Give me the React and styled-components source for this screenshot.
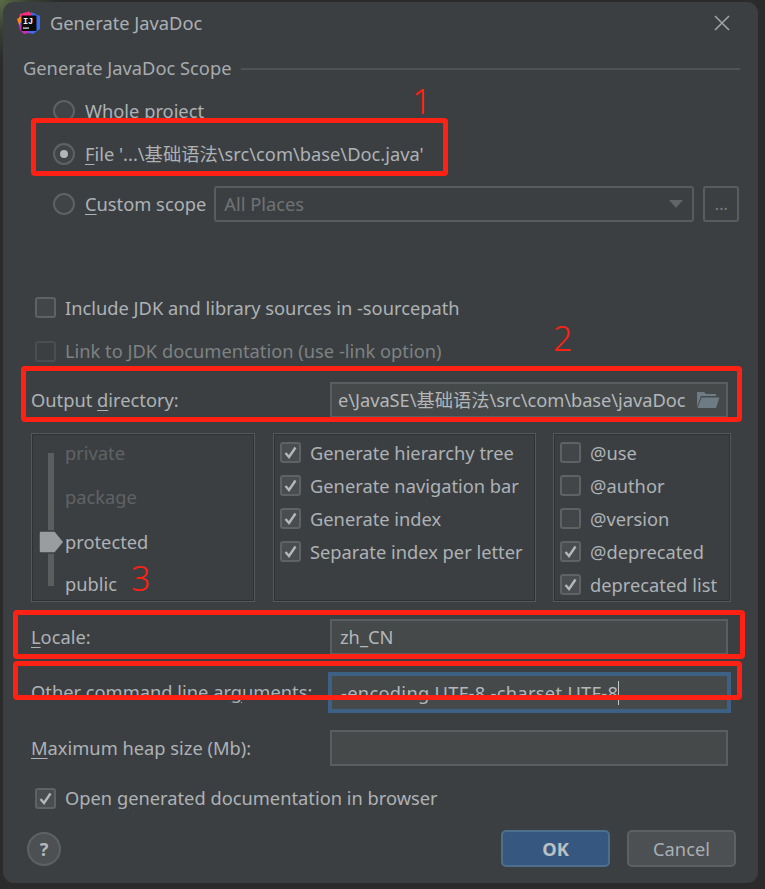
import React from "react";
import styled, { createGlobalStyle } from "styled-components";

const GlobalStyle = createGlobalStyle`
  html, body {
    margin: 0;
    padding: 0;
    background: #2b2b2b;
  }
  body {
    font-family: "Noto Sans", "Noto Sans CJK SC", sans-serif;
    font-size: 18.3px;
    color: #adb2b6;
  }
`;

const Page = styled.div`
  position: relative;
  width: 765px;
  height: 889px;
  overflow: hidden;
  padding: 2px 7px 6px 3px;
  box-sizing: border-box;
  background: radial-gradient(circle at 0 0, #5a6b45 0, #3a3f36 30px, #2b2b2b 60px);
`;

const Dialog = styled.div`
  height: 881px;
  background: #3c3f41;
  border-radius: 11px;
  display: flex;
  flex-direction: column;
`;

const TitleBar = styled.div`
  height: 42px;
  display: flex;
  align-items: center;
  padding: 0 28px 0 14px;
  flex: none;
`;

const AppTitle = styled.div`
  margin-left: 9px;
  flex: 1;
  color: #abb0b4;
  padding-bottom: 2px;
`;

const GroupHeader = styled.div`
  margin: 12px 18px 0 20px;
  height: 24px;
  display: flex;
  align-items: center;
  gap: 10px;
  color: #a6abaf;
`;

const GroupLine = styled.div`
  flex: 1;
  height: 2px;
  margin-top: 2px;
  background: #505253;
`;

const Row = styled.div`
  margin-top: ${(p) => p.$top}px;
  margin-left: ${(p) => p.$left}px;
  height: ${(p) => p.$height || 36}px;
  display: flex;
  align-items: center;
  flex: none;
  white-space: nowrap;
  color: ${(p) => (p.$disabled ? "#7d8285" : "#adb2b6")};
`;

const Label = styled.span`
  padding-bottom: 2px;
`;

const Radio = styled.div`
  width: 22px;
  height: 22px;
  box-sizing: border-box;
  border-radius: 50%;
  border: 2px solid #5f6264;
  background: #404446;
  margin-right: 10px;
  flex: none;
  display: flex;
  align-items: center;
  justify-content: center;
  &::after {
    content: "";
    display: ${(p) => (p.$checked ? "block" : "none")};
    width: 8px;
    height: 8px;
    border-radius: 50%;
    background: #b2b5b7;
  }
`;

const Mnemonic = styled.span`
  text-decoration: underline;
  text-underline-offset: 3px;
`;

const Combo = styled.div`
  margin-left: 8px;
  width: 480px;
  height: 36px;
  box-sizing: border-box;
  border: 2px solid #595c5e;
  border-radius: 3px;
  padding: 0 9px 0 8px;
  display: flex;
  align-items: center;
  justify-content: space-between;
  color: #6f7375;
`;

const ComboArrow = styled.div`
  width: 0;
  height: 0;
  border-left: 7px solid transparent;
  border-right: 7px solid transparent;
  border-top: 8px solid #626466;
`;

const DotsButton = styled.div`
  margin-left: 9px;
  width: 36px;
  height: 36px;
  box-sizing: border-box;
  border: 2px solid #595c5e;
  border-radius: 3px;
  display: flex;
  align-items: center;
  justify-content: center;
  color: #7a7d80;
  font-size: 16px;
`;

const CheckBoxShape = styled.div`
  width: 21px;
  height: 21px;
  box-sizing: border-box;
  border-radius: 3px;
  border: 2px solid ${(p) => (p.$disabled ? "#4b4e50" : "#5f6264")};
  background: ${(p) => (p.$checked ? "#4a4d4f" : p.$disabled ? "#3c3f41" : "#424648")};
  margin-right: 9px;
  flex: none;
  display: flex;
  align-items: center;
  justify-content: center;
`;

const FieldLabel = styled.div`
  width: 299px;
  flex: none;
  padding-bottom: 2px;
`;

const Field = styled.div`
  width: 398px;
  height: ${(p) => p.$height || 36}px;
  box-sizing: border-box;
  background: #45494a;
  border: 2px solid #5b5e60;
  padding: 0 8px 2px;
  display: flex;
  align-items: center;
  overflow: hidden;
  flex: none;
  color: #b3b7ba;
`;

const FocusField = styled(Field)`
  width: 403px;
  margin-left: -2px;
  border: 4px solid #3d6185;
  padding: 0 9px;
  letter-spacing: 0.3px;
`;

const Caret = styled.span`
  display: inline-block;
  width: 1px;
  height: 24px;
  background: #c4c7c9;
`;

const OutputField = styled(Field)`
  justify-content: space-between;
  padding: 0 6px 0 6px;
`;

const OutputText = styled.span`
  padding-bottom: 2px;
  letter-spacing: -0.05px;
`;

const Panels = styled.div`
  margin: 15px 0 0 28px;
  height: 169px;
  display: flex;
  flex: none;
`;

const Panel = styled.div`
  width: ${(p) => p.$width}px;
  margin-right: ${(p) => p.$gap || 0}px;
  box-sizing: border-box;
  border: 1px solid #55585a;
  outline: 1px solid #2f3234;
  outline-offset: -2px;
  padding: 2px 0 0 6px;
`;

const PanelRow = styled.div`
  height: 33px;
  display: flex;
  align-items: center;
  white-space: nowrap;
`;

const SliderPanel = styled(Panel)`
  display: flex;
  padding: 0;
`;

const Track = styled.div`
  position: relative;
  margin: 19px 0 0 16px;
  width: 6px;
  height: 133px;
  background: #5b5d5f;
  flex: none;
`;

const Thumb = styled.svg`
  position: absolute;
  left: -9px;
  top: 78px;
  overflow: visible;
`;

const SliderLabels = styled.div`
  margin-left: 11px;
  padding-top: 4px;
  display: flex;
  flex-direction: column;
`;

const SliderLabel = styled.div`
  height: ${(p) => p.$height}px;
  line-height: 30px;
  color: ${(p) => (p.$disabled ? "#5f6366" : "#adb2b6")};
`;

const Footer = styled.div`
  margin: 21px 22px 0 24px;
  height: 37px;
  display: flex;
  align-items: center;
  flex: none;
`;

const Help = styled.div`
  width: 34px;
  height: 34px;
  box-sizing: border-box;
  border-radius: 50%;
  background: #4c5052;
  border: 2px solid #5e6163;
  display: flex;
  align-items: center;
  justify-content: center;
  font-weight: 700;
  font-size: 18px;
  color: #b4b7b9;
`;

const Spacer = styled.div`
  flex: 1;
`;

const Button = styled.div`
  width: 109px;
  height: 37px;
  box-sizing: border-box;
  margin-left: ${(p) => p.$left || 0}px;
  border-radius: 5px;
  border: 2px solid ${(p) => (p.$primary ? "#4c708c" : "#5e6163")};
  background: ${(p) => (p.$primary ? "#365880" : "#4c5052")};
  color: ${(p) => (p.$primary ? "#bbc0c4" : "#a9aeb2")};
  font-weight: ${(p) => (p.$primary ? 700 : 400)};
  display: flex;
  align-items: center;
  justify-content: center;
`;

// red marks drawn over the screenshot
const RedBox = styled.div`
  position: absolute;
  left: ${(p) => p.$x}px;
  top: ${(p) => p.$y}px;
  width: ${(p) => p.$w}px;
  height: ${(p) => p.$h}px;
  box-sizing: border-box;
  border: 5px solid #ff2114;
  border-radius: 4px;
`;

const RedNumber = styled.div`
  position: absolute;
  left: ${(p) => p.$x}px;
  top: ${(p) => p.$y}px;
  font-family: "Noto Sans", sans-serif;
  font-size: 34px;
  line-height: 40px;
  font-weight: 300;
  color: #ff2114;
`;

const Check = () => (
  <svg width="15" height="15" viewBox="0 0 15 15">
    <path d="M2.5 8 L6 12 L12.5 2.5" fill="none" stroke="#b4b7b9" strokeWidth="2.4" />
  </svg>
);

const CheckBox = ({ checked, disabled }) => (
  <CheckBoxShape $checked={checked} $disabled={disabled}>
    {checked && <Check />}
  </CheckBoxShape>
);

const AppIcon = () => (
  <svg width="24" height="24" viewBox="0 0 24 24">
    <polygon points="3,3 12,0.5 16,5 8,13 1,11" fill="#ff2f7e" />
    <polygon points="0,8 5,5 7,15 3,17" fill="#fc801d" />
    <polygon points="14,1 23,5 23,18 16,23 8,21 4,18 3,12 14,8" fill="#3b6cf0" />
    <polygon points="2,14 8,10 12,22 7,23 3,19" fill="#c22fb5" />
    <rect x="4.5" y="4.5" width="15" height="15.5" fill="#0c0c0c" />
    <text x="6" y="12.5" fontFamily="Liberation Mono, monospace" fontWeight="700" fontSize="8.5" fill="#f2f2f2">
      IJ
    </text>
    <rect x="6" y="16.5" width="6" height="1.2" fill="#e8e8e8" />
  </svg>
);

const CloseIcon = () => (
  <svg width="16" height="16" viewBox="0 0 16 16">
    <path d="M1 1 L15 15 M15 1 L1 15" stroke="#a3a6a8" strokeWidth="1.5" />
  </svg>
);

const FolderIcon = () => (
  <svg width="24" height="18" viewBox="0 0 24 18" style={{ flex: "none" }}>
    <path d="M1 16 V1 H8 L10 3 H20 V5 H5 Z" fill="#6d7c84" />
    <path d="M5.5 6.5 H23.5 L20 17 H1.5 Z" fill="#6d7c84" />
  </svg>
);

const hierarchyRows = [
  "Generate hierarchy tree",
  "Generate navigation bar",
  "Generate index",
  "Separate index per letter",
];

const tagRows = [
  { label: "@use", checked: false },
  { label: "@author", checked: false },
  { label: "@version", checked: false },
  { label: "@deprecated", checked: true },
  { label: "deprecated list", checked: true },
];

export default function App() {
  return (
    <Page>
      <GlobalStyle />
      <Dialog>
        <TitleBar>
          <AppIcon />
          <AppTitle>Generate JavaDoc</AppTitle>
          <CloseIcon />
        </TitleBar>

        <GroupHeader>
          <Label>Generate JavaDoc Scope</Label>
          <GroupLine />
        </GroupHeader>

        <Row $top={13} $left={50}>
          <Radio />
          <Label>Whole project</Label>
        </Row>
        <Row $top={7} $left={50}>
          <Radio $checked />
          <Label>
            <Mnemonic>F</Mnemonic>ile '...\基础语法\src\com\base\Doc.java'
          </Label>
        </Row>
        <Row $top={14} $left={50}>
          <Radio />
          <Label>
            <Mnemonic>C</Mnemonic>ustom scope
          </Label>
          <Combo>
            <Label>All Places</Label>
            <ComboArrow />
          </Combo>
          <DotsButton>...</DotsButton>
        </Row>

        <Row $top={74} $left={32} $height={22}>
          <CheckBox />
          Include JDK and library sources in -sourcepath
        </Row>
        <Row $top={22} $left={32} $height={22} $disabled>
          <CheckBox disabled />
          <Label>Link to JDK documentation (use -link option)</Label>
        </Row>

        <Row $top={20} $left={28}>
          <FieldLabel>
            Output <Mnemonic>d</Mnemonic>irectory:
          </FieldLabel>
          <OutputField>
            <OutputText>e\JavaSE\基础语法\src\com\base\javaDoc</OutputText>
            <FolderIcon />
          </OutputField>
        </Row>

        <Panels>
          <SliderPanel $width={224} $gap={18}>
            <Track>
              <Thumb width="25" height="22" viewBox="0 0 25 22">
                <path
                  d="M2 0 H16 L25 11 L16 22 H2 Q0 22 0 20 V2 Q0 0 2 0 Z"
                  fill="#9a9d9f"
                  stroke="#3c3f41"
                  strokeWidth="1.5"
                />
              </Thumb>
            </Track>
            <SliderLabels>
              <SliderLabel $disabled $height={44}>private</SliderLabel>
              <SliderLabel $disabled $height={45}>package</SliderLabel>
              <SliderLabel $height={42}>protected</SliderLabel>
              <SliderLabel $height={30}>public</SliderLabel>
            </SliderLabels>
          </SliderPanel>
          <Panel $width={263} $gap={17}>
            {hierarchyRows.map((label) => (
              <PanelRow key={label}>
                <CheckBox checked />
                {label}
              </PanelRow>
            ))}
          </Panel>
          <Panel $width={178}>
            {tagRows.map((row) => (
              <PanelRow key={row.label}>
                <CheckBox checked={row.checked} />
                {row.label}
              </PanelRow>
            ))}
          </Panel>
        </Panels>

        <Row $top={17} $left={28}>
          <FieldLabel>
            <Mnemonic>L</Mnemonic>ocale:
          </FieldLabel>
          <Field>zh_CN</Field>
        </Row>
        <Row $top={17} $left={28} $height={41}>
          <FieldLabel>
            Other command line ar<Mnemonic>g</Mnemonic>uments:
          </FieldLabel>
          <FocusField $height={41}>
            -encoding UTF-8 -charset UTF-8
            <Caret />
          </FocusField>
        </Row>
        <Row $top={17} $left={28}>
          <FieldLabel>
            <Mnemonic>M</Mnemonic>aximum heap size (Mb):
          </FieldLabel>
          <Field />
        </Row>
        <Row $top={21} $left={32} $height={22}>
          <CheckBox checked />
          <Label>
            Open <Mnemonic>g</Mnemonic>enerated documentation in browser
          </Label>
        </Row>

        <Footer>
          <Help>?</Help>
          <Spacer />
          <Button $primary>OK</Button>
          <Button $left={17}>Cancel</Button>
        </Footer>
      </Dialog>

      <RedBox $x={31} $y={118} $w={417} $h={58} />
      <RedBox $x={21} $y={366} $w={721} $h={56} />
      <RedBox $x={13} $y={610} $w={732} $h={49} />
      <RedBox $x={13} $y={661} $w={729} $h={39} />
      <RedNumber $x={412} $y={81}>1</RedNumber>
      <RedNumber $x={553} $y={318}>2</RedNumber>
      <RedNumber $x={131} $y={558}>3</RedNumber>
    </Page>
  );
}
